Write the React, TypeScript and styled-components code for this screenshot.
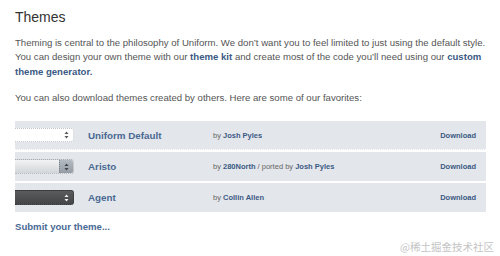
import React from "react";
import styled, { createGlobalStyle, css } from "styled-components";

const Global = createGlobalStyle`
  html, body { margin: 0; padding: 0; background: #fff; }
  body { font-family: "Liberation Sans", Arial, sans-serif; color: #555; }
`;

const Page = styled.div`
  width: 500px;
  height: 256px;
  box-sizing: border-box;
  padding: 7px 14px 0 15px;
  position: relative;
  overflow: hidden;
`;

const Title = styled.h1`
  margin: 0;
  font-size: 14px;
  font-weight: normal;
  color: #333;
  line-height: 20px;
`;

const Para = styled.p`
  margin: 9px 0 0;
  font-size: 9.6px;
  line-height: 14.3px;
  color: #555;
  & + & { margin-top: 12px; }
`;

const A = styled.a`
  color: #3b5a84;
  font-weight: bold;
  text-decoration: none;
`;

const Table = styled.div`
  margin-top: 16px;
  display: flex;
  flex-direction: column;
  gap: 2px;
  width: 471px;
`;

const Row = styled.div<{ $dotted?: boolean }>`
  height: 29px;
  box-sizing: border-box;
  background: #e3e6ea;
  display: grid;
  grid-template-columns: 73px 125px 1fr auto;
  align-items: center;
  padding-right: 10px;
  ${(p) =>
    p.$dotted &&
    css`
      border-bottom: 1px dotted #fff;
    `}
`;

type V = "light" | "grey" | "dark";

const SelectBox = styled.div<{ $v: V }>`
  width: 59px;
  height: ${(p) => (p.$v === "light" ? 14 : 15)}px;
  box-sizing: border-box;
  border-radius: 0 3px 3px 0;
  display: flex;
  justify-content: flex-end;
  align-items: stretch;
  ${(p) =>
    p.$v === "light" &&
    css`
      background: #fff;
      border: 1px dotted #bfc4ca;
      border-left: none;
    `}
  ${(p) =>
    p.$v === "grey" &&
    css`
      background: linear-gradient(#f2f3f4, #d2d5d9);
      border: 1px dotted #a9adb2;
      border-left: none;
    `}
  ${(p) =>
    p.$v === "dark" &&
    css`
      background: linear-gradient(#5a5b5d, #444547);
      border: 1px dotted #333;
      border-left: none;
    `}
`;

const ArrowBtn = styled.div<{ $v: V }>`
  width: 13px;
  display: flex;
  align-items: center;
  justify-content: center;
  ${(p) =>
    p.$v === "grey" &&
    css`
      background: linear-gradient(#b4bac1, #959ca5);
      border-left: 1px dotted #7d838b;
      border-radius: 0 2px 2px 0;
    `}
`;

const Name = styled.a`
  font-size: 9.8px;
  font-weight: bold;
  color: #4a6a94;
  text-decoration: none;
`;

const By = styled.span`
  font-size: 7.5px;
  color: #666;
`;

const ByLink = styled.a`
  font-weight: bold;
  color: #3b5a84;
  text-decoration: none;
`;

const Download = styled.a`
  font-size: 7.5px;
  font-weight: bold;
  color: #3b5a84;
  text-decoration: none;
`;

const Submit = styled.a`
  display: block;
  margin-top: 9px;
  font-size: 9.6px;
  font-weight: bold;
  color: #4a6a94;
  text-decoration: none;
`;

const Watermark = styled.div`
  position: absolute;
  right: 6px;
  bottom: 2px;
  font-family: "Noto Sans CJK SC", sans-serif;
  font-size: 10.5px;
  color: #c4c4c4;
`;

function Arrows({ color }: { color: string }) {
  return (
    <svg width="5" height="8" viewBox="0 0 5 8">
      <path d="M2.5 0.5 L4.5 3 L0.5 3 Z" fill={color} />
      <path d="M2.5 7.5 L4.5 5 L0.5 5 Z" fill={color} />
    </svg>
  );
}

function Select({ v }: { v: V }) {
  const c = v === "dark" ? "#f2f2f2" : v === "grey" ? "#3f4347" : "#555";
  return (
    <SelectBox $v={v}>
      <ArrowBtn $v={v}>
        <Arrows color={c} />
      </ArrowBtn>
    </SelectBox>
  );
}

export default function App() {
  return (
    <>
      <Global />
      <Page>
        <Title>Themes</Title>
        <Para>
          Theming is central to the philosophy of Uniform. We don’t want you to feel limited to just using the default style.
          You can design your own theme with our <A href="#">theme kit</A> and create most of the code you’ll need using our{" "}
          <A href="#">custom theme generator.</A>
        </Para>
        <Para>You can also download themes created by others. Here are some of our favorites:</Para>
        <Table>
          <Row $dotted>
            <Select v="light" />
            <Name href="#">Uniform Default</Name>
            <By>
              by <ByLink href="#">Josh Pyles</ByLink>
            </By>
            <Download href="#">Download</Download>
          </Row>
          <Row>
            <Select v="grey" />
            <Name href="#">Aristo</Name>
            <By>
              by <ByLink href="#">280North</ByLink> / ported by <ByLink href="#">Josh Pyles</ByLink>
            </By>
            <Download href="#">Download</Download>
          </Row>
          <Row>
            <Select v="dark" />
            <Name href="#">Agent</Name>
            <By>
              by <ByLink href="#">Collin Allen</ByLink>
            </By>
            <Download href="#">Download</Download>
          </Row>
        </Table>
        <Submit href="#">Submit your theme...</Submit>
        <Watermark>@稀土掘金技术社区</Watermark>
      </Page>
    </>
  );
}
